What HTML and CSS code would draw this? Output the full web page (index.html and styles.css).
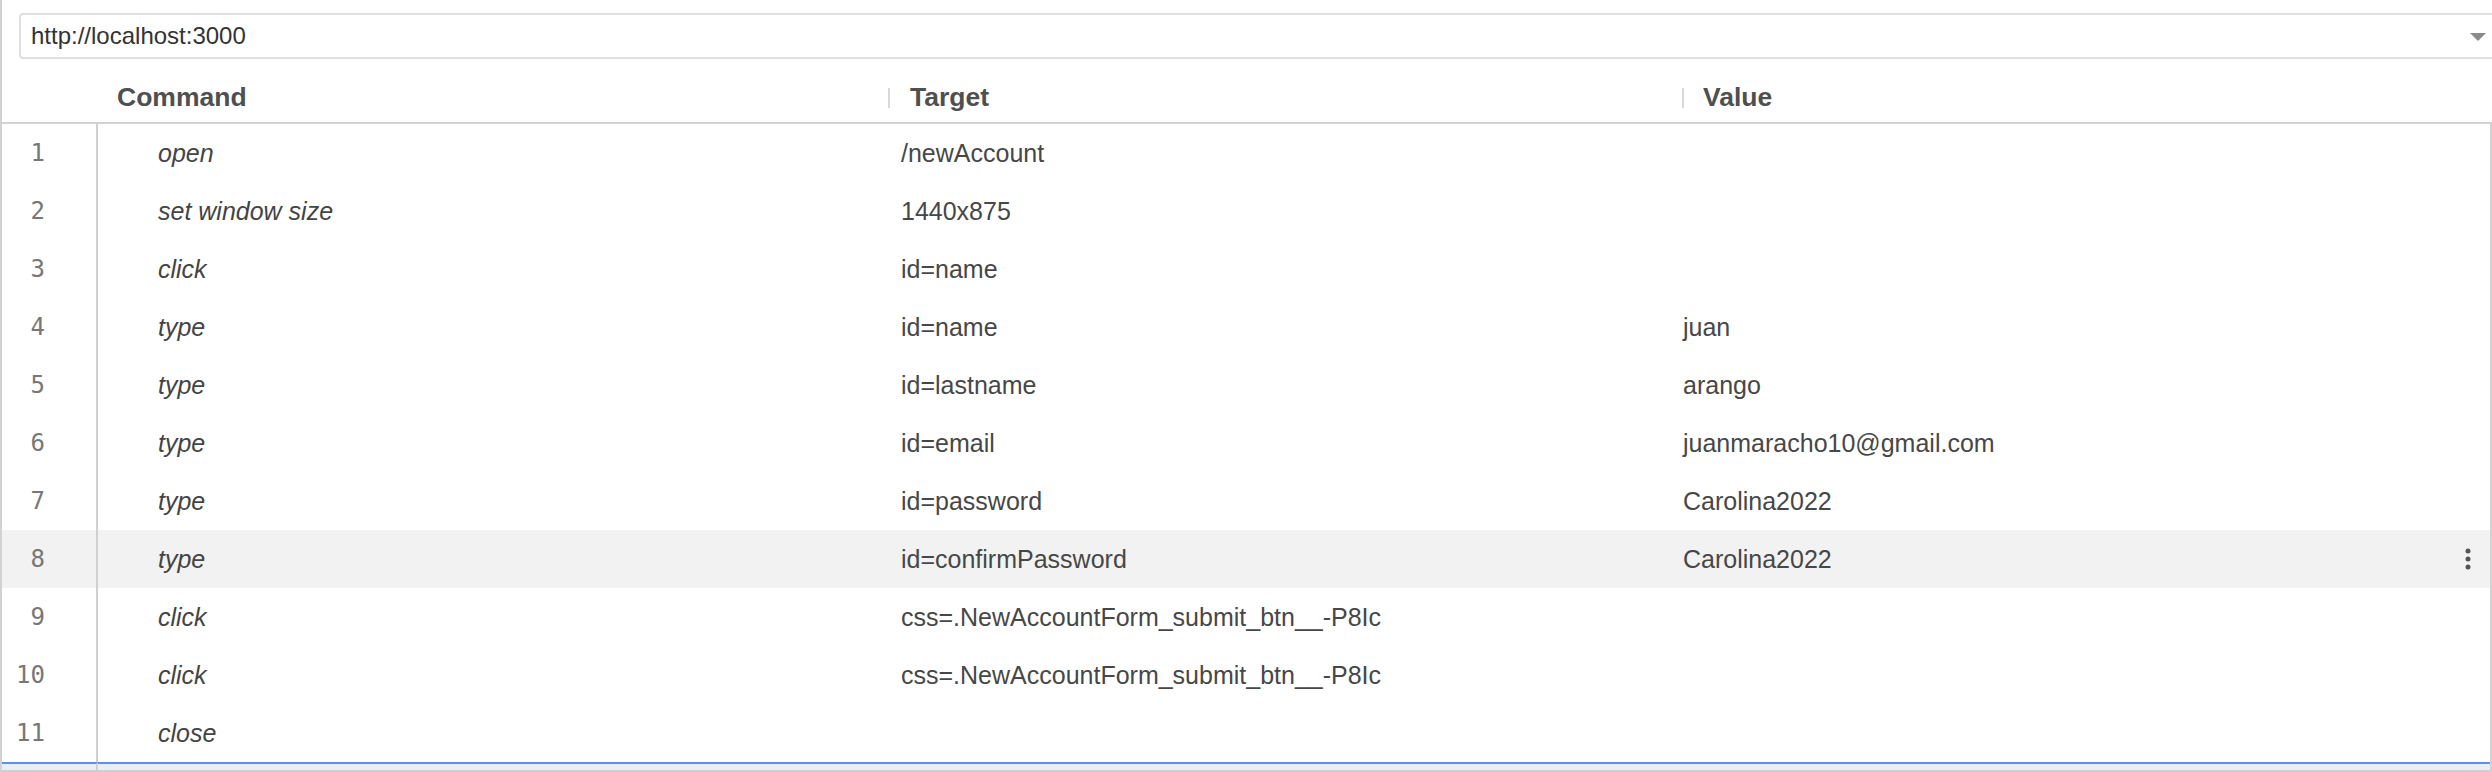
FILE: index.html
```html
<!DOCTYPE html>
<html lang="en">
<head>
<meta charset="utf-8">
<title>Test editor</title>
<link rel="stylesheet" href="styles.css">
</head>
<body>
<div class="app">
  <div class="topbar">
    <div class="urlbox">
      <span class="url">http://localhost:3000</span>
      <span class="caret"></span>
    </div>
  </div>
  <div class="thead">
    <div class="th th-gutter"></div>
    <div class="th th-cmd">Command</div>
    <div class="th th-target"><span class="sep"></span>Target</div>
    <div class="th th-value"><span class="sep"></span>Value</div>
    <div class="th th-act"></div>
  </div>
  <div class="tbody">
    <div class="row"><div class="num">1</div><div class="cmd"><span>open</span></div><div class="target">/newAccount</div><div class="value"></div><div class="act"></div></div>
    <div class="row"><div class="num">2</div><div class="cmd"><span>set window size</span></div><div class="target">1440x875</div><div class="value"></div><div class="act"></div></div>
    <div class="row"><div class="num">3</div><div class="cmd"><span>click</span></div><div class="target">id=name</div><div class="value"></div><div class="act"></div></div>
    <div class="row"><div class="num">4</div><div class="cmd"><span>type</span></div><div class="target">id=name</div><div class="value">juan</div><div class="act"></div></div>
    <div class="row"><div class="num">5</div><div class="cmd"><span>type</span></div><div class="target">id=lastname</div><div class="value">arango</div><div class="act"></div></div>
    <div class="row"><div class="num">6</div><div class="cmd"><span>type</span></div><div class="target">id=email</div><div class="value">juanmaracho10@gmail.com</div><div class="act"></div></div>
    <div class="row"><div class="num">7</div><div class="cmd"><span>type</span></div><div class="target">id=password</div><div class="value">Carolina2022</div><div class="act"></div></div>
    <div class="row row-hover"><div class="num">8</div><div class="cmd"><span>type</span></div><div class="target">id=confirmPassword</div><div class="value">Carolina2022</div><div class="act"><svg class="kebab" width="6" height="22" viewBox="0 0 6 22"><circle cx="3" cy="3" r="2.5"/><circle cx="3" cy="11" r="2.5"/><circle cx="3" cy="19" r="2.5"/></svg></div></div>
    <div class="row"><div class="num">9</div><div class="cmd"><span>click</span></div><div class="target">css=.NewAccountForm_submit_btn__-P8Ic</div><div class="value"></div><div class="act"></div></div>
    <div class="row"><div class="num">10</div><div class="cmd"><span>click</span></div><div class="target">css=.NewAccountForm_submit_btn__-P8Ic</div><div class="value"></div><div class="act"></div></div>
    <div class="row"><div class="num">11</div><div class="cmd"><span>close</span></div><div class="target"></div><div class="value"></div><div class="act"></div></div>
    <div class="dropzone"><div class="dz-gutter"></div><div class="dz-rest"></div></div>
  </div>
</div>
</body>
</html>
```

FILE: styles.css
```css
html, body {
  margin: 0;
  padding: 0;
  background: #ffffff;
  overflow: hidden;
}

body {
  width: 2492px;
  height: 772px;
  font-family: "Liberation Sans", Arial, Helvetica, sans-serif;
  color: #444;
}

.app {
  box-sizing: border-box;
  width: 2492px;
  height: 772px;
  border-left: 2px solid #d2d2d2;
  display: flex;
  flex-direction: column;
}

.topbar {
  padding: 13px 0 0 17px;
  overflow: hidden;
}

.urlbox {
  box-sizing: border-box;
  height: 46px;
  margin-right: -8px;
  border: 2px solid #e0e0e0;
  border-radius: 4px;
  display: flex;
  align-items: center;
  padding-left: 10px;
}

.url {
  flex: 1;
  font-size: 24px;
  color: #333;
}

.caret {
  width: 0;
  height: 0;
  border-left: 8px solid transparent;
  border-right: 8px solid transparent;
  border-top: 8px solid #8a8a8a;
  margin-right: 12px;
  margin-top: 2px;
}

.thead {
  box-sizing: border-box;
  height: 65px;
  padding-top: 14px;
  border-bottom: 2px solid #d2d2d2;
  display: flex;
}

.th {
  display: flex;
  align-items: center;
  flex: none;
  font-weight: bold;
  font-size: 26.5px;
  color: #4f4f4f;
}

.th-gutter { width: 96px; }
.th-cmd { width: 790px; box-sizing: border-box; padding-left: 19px; }
.th-target { width: 794px; }
.th-value { flex: 1; }
.th-act { width: 50px; }

.sep {
  display: inline-block;
  width: 2px;
  height: 20px;
  background: #d8d8d8;
  margin-right: 20px;
}

.th-value .sep {
  margin-right: 19px;
}

.tbody {
  flex: 1;
  border-right: 2px solid #d2d2d2;
  border-bottom: 2px solid #cfcfcf;
  display: flex;
  flex-direction: column;
}

.row {
  height: 58px;
  flex: none;
  display: flex;
  font-size: 25px;
  color: #474747;
}

.row > div {
  box-sizing: border-box;
  display: flex;
  align-items: center;
  flex: none;
  white-space: nowrap;
}

.row-hover {
  background: #f2f2f2;
}

.row > .num {
  width: 96px;
  border-right: 2px solid #d0d0d0;
  justify-content: flex-end;
  padding-right: 51px;
  font-family: "DejaVu Sans Mono", "Liberation Mono", monospace;
  font-size: 24px;
  color: #777;
}

.row > .cmd {
  width: 790px;
  padding-left: 60px;
  justify-content: flex-start;
  font-style: italic;
  color: #444;
}

.row > .target {
  width: 794px;
  padding-left: 13px;
}

.row > .value {
  flex: 1;
  min-width: 0;
  padding-left: 1px;
}

.row > .act {
  width: 50px;
  padding-left: 25px;
}

.kebab {
  fill: #555;
  display: block;
}

.dropzone {
  flex: 1;
  display: flex;
}

.dz-gutter,
.dz-rest {
  border-top: 2px solid #5b90ee;
  background: #eaeef3;
}

.dz-gutter {
  box-sizing: border-box;
  width: 96px;
  border-right: 2px solid #d0d0d0;
}

.dz-rest {
  flex: 1;
}
```
